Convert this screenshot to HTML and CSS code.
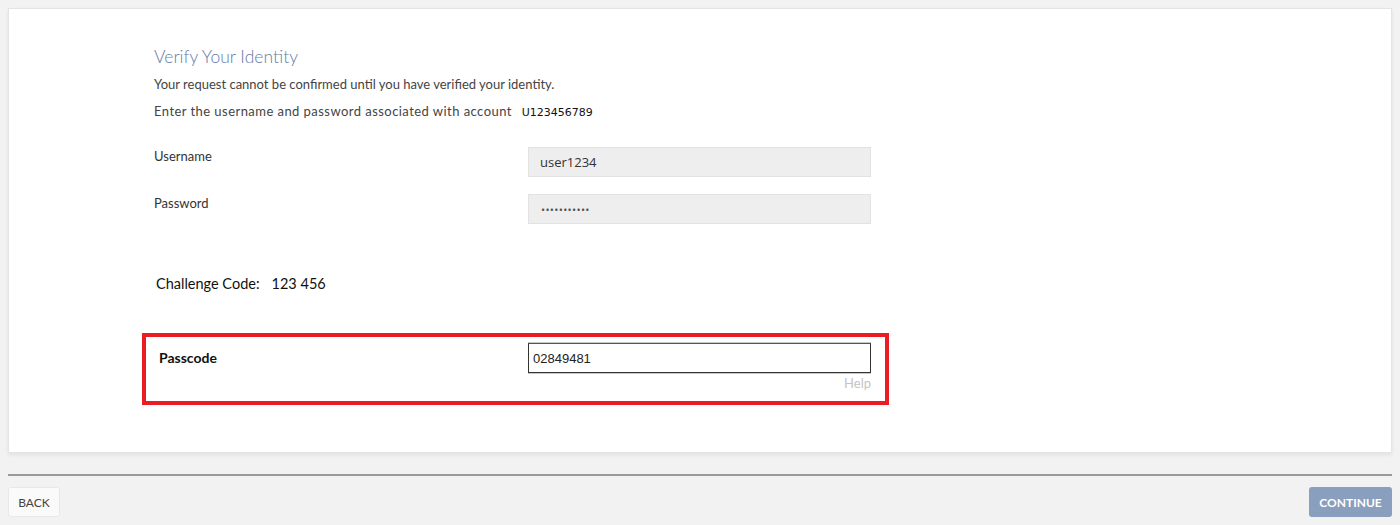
FILE: index.html
```html
<!DOCTYPE html>
<html lang="en">
<head>
<meta charset="utf-8">
<title>Verify Your Identity</title>
<link rel="stylesheet" href="styles.css">
</head>
<body>
<div class="card">
  <h1 class="title">Verify Your Identity</h1>
  <p class="line first">Your request cannot be confirmed until you have verified your identity.</p>
  <p class="line second">Enter the username and password associated with account <span class="acct">U123456789</span></p>

  <div class="fields">
    <div class="row">
      <label class="label" for="u">Username</label>
      <input class="field" id="u" type="text" value="user1234" readonly>
    </div>
    <div class="row">
      <label class="label" for="p">Password</label>
      <input class="field pw" id="p" type="password" value="12345678901" readonly>
    </div>
  </div>

  <div class="challenge">Challenge Code:<span class="code">123 456</span></div>

  <div class="passbox">
    <label class="pass-label" for="c">Passcode</label>
    <div class="pass-col">
      <input class="pass-field" id="c" type="text" value="02849481" readonly>
      <div class="help">Help</div>
    </div>
  </div>
</div>

<div class="divider"></div>

<div class="footer">
  <button class="btn back">BACK</button>
  <button class="btn continue">CONTINUE</button>
</div>
</body>
</html>
```

FILE: styles.css
```css
* { box-sizing: border-box; }

html, body {
  margin: 0;
  background: #f2f2f2;
}

body {
  padding: 8px;
  font-family: Lato, "Open Sans", Arial, sans-serif;
  color: #444;
}

.card {
  height: 445px;
  background: #fff;
  border: 1px solid #e4e4e4;
  box-shadow: 0 2px 4px rgba(0, 0, 0, 0.07);
  padding: 38px 0 0 145px;
}

.title {
  margin: 0;
  font-size: 17.5px;
  font-weight: 300;
  line-height: 20px;
  color: #667aa6;
}

.line {
  margin: 0;
  font-size: 13px;
  line-height: 18px;
  color: #444;
}

.line.first { margin-top: 8px; }
.line.second {
  margin-top: 9px;
  letter-spacing: 0.45px;
}

.acct {
  font-family: "DejaVu Sans", Verdana, sans-serif;
  font-size: 11px;
  letter-spacing: 0;
  color: #111;
  margin-left: 6px;
}

.fields {
  margin-top: 25px;
  display: flex;
  flex-direction: column;
  gap: 17px;
}

.row {
  display: grid;
  grid-template-columns: 374px 343px;
  align-items: start;
}

.label {
  font-size: 13px;
  line-height: 18px;
  color: #333;
}

.field {
  width: 343px;
  height: 30px;
  margin: 0;
  background: #eeeeee;
  border: 1px solid #e2e2e2;
  border-radius: 0;
  padding: 0 11px;
  font-family: "Open Sans", sans-serif;
  font-size: 13px;
  color: #333;
  outline: none;
}

.field.pw {
  font-size: 11px;
  letter-spacing: 0.3px;
  padding-left: 12px;
  color: #555;
}

.challenge {
  margin-top: 50px;
  padding-left: 2px;
  font-size: 14.5px;
  line-height: 20px;
  color: #111;
}

.code { margin-left: 12px; }

.passbox {
  margin-top: 39px;
  margin-left: -12px;
  width: 747px;
  height: 72px;
  border: 4px solid #ec1c24;
  padding: 6px 14px 0 13px;
  display: grid;
  grid-template-columns: 369px 343px;
  align-items: start;
}

.pass-label {
  font-size: 14px;
  font-weight: 700;
  line-height: 30px;
  color: #111;
}

.pass-col {
  display: flex;
  flex-direction: column;
}

.pass-field {
  width: 343px;
  height: 30px;
  margin: 0;
  background: #fff;
  border: 1px solid #333;
  border-top-color: #555;
  box-shadow: 0 -1px 0 #c8c8c8, 0 1px 0 #c8c8c8;
  border-radius: 0;
  padding: 0 4px;
  font-family: "Liberation Sans", Arial, sans-serif;
  font-size: 13px;
  color: #222;
  outline: none;
}

.help {
  margin-top: 2px;
  text-align: right;
  font-size: 13px;
  line-height: 16px;
  color: #c4c4c4;
}

.divider {
  margin-top: 21px;
  height: 2px;
  background: #9a9a9a;
}

.footer {
  margin-top: 11px;
  display: flex;
  justify-content: space-between;
  align-items: center;
}

.btn {
  height: 30px;
  margin: 0;
  border-radius: 3px;
  font-family: Lato, Arial, sans-serif;
  font-size: 12px;
  cursor: pointer;
}

.back {
  width: 52px;
  padding: 0;
  background: #fafafa;
  border: 1px solid #e8e8e8;
  color: #444;
}

.continue {
  width: 83px;
  padding: 0;
  background: #8a9ebd;
  border: none;
  color: #fff;
  font-weight: 700;
}
```
